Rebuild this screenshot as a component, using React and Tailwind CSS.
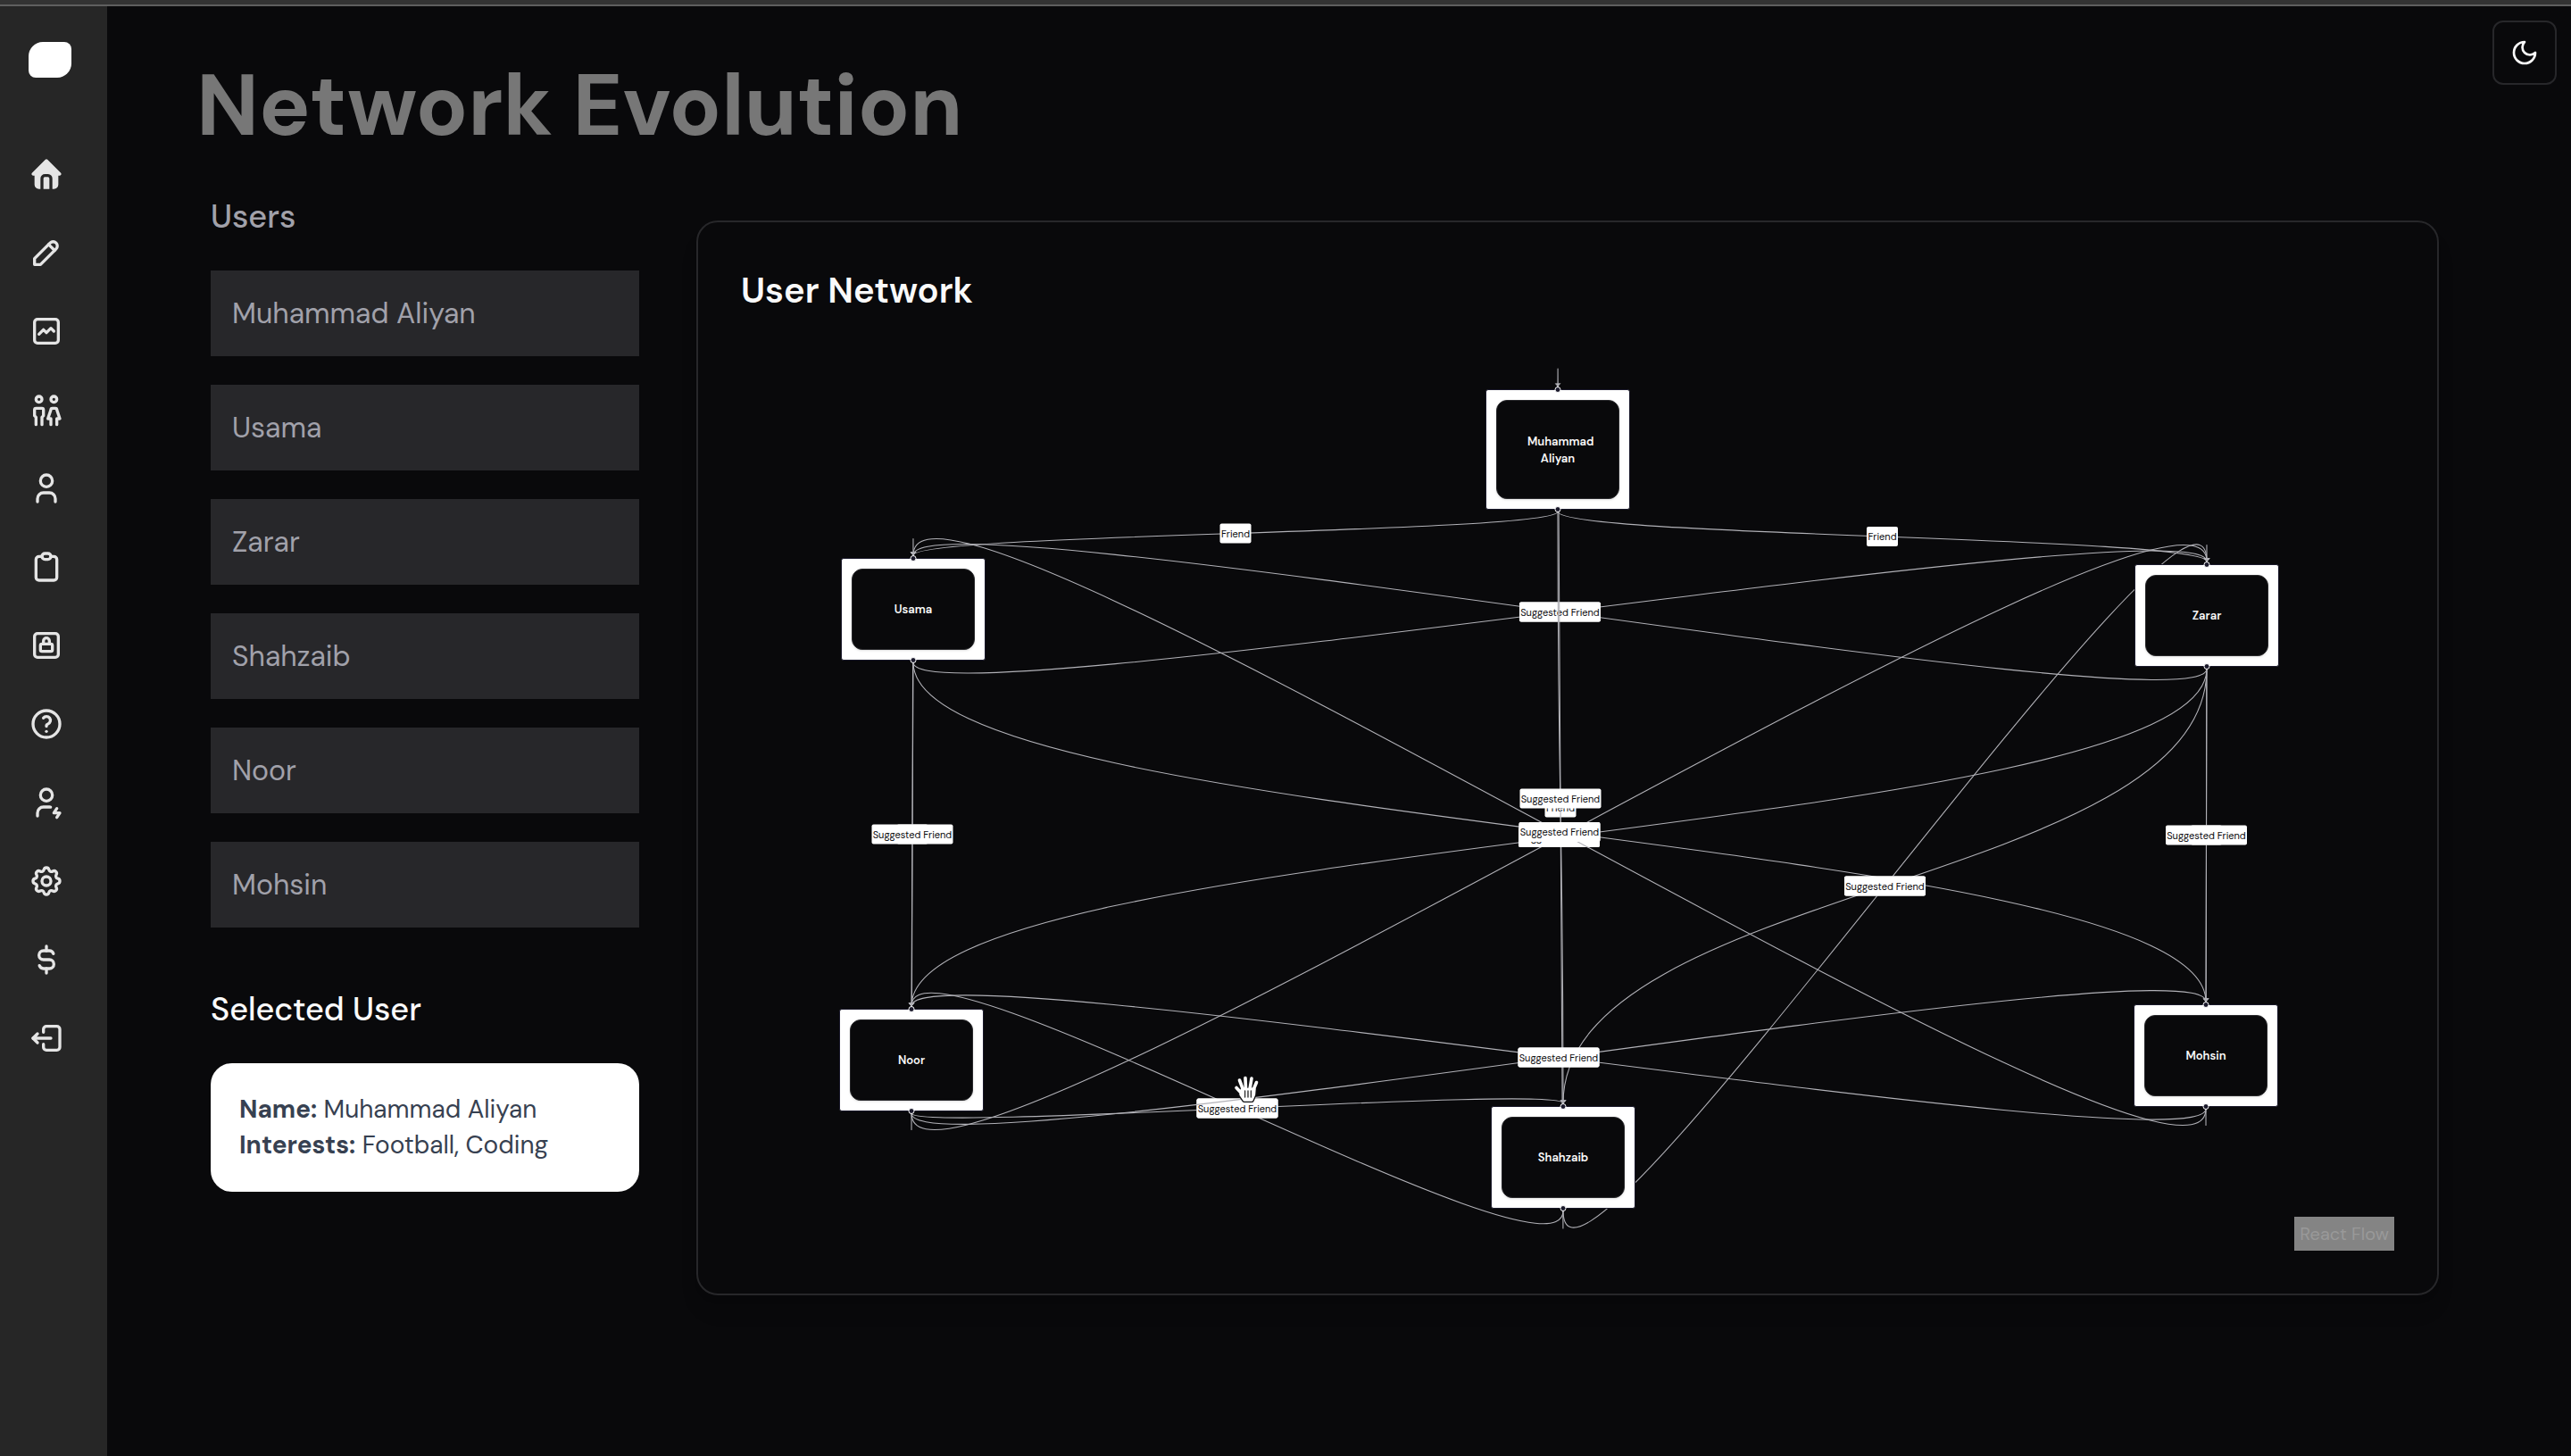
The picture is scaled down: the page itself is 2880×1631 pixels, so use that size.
import { useState } from "react";

const users = [
  { name: "Muhammad Aliyan", interests: "Football, Coding" },
  { name: "Usama", interests: "Cricket, Music" },
  { name: "Zarar", interests: "Gaming, Travel" },
  { name: "Shahzaib", interests: "Coding, Chess" },
  { name: "Noor", interests: "Reading, Art" },
  { name: "Mohsin", interests: "Football, Photography" },
];

const navIcons = [
  {
    label: "Home",
    filled: true,
    paths: [
      "M12.707 2.293l9 9c.63 .63 .184 1.707 -.707 1.707h-1v6a3 3 0 0 1 -3 3h-1v-7a3 3 0 0 0 -2.824 -2.995l-.176 -.005h-2a3 3 0 0 0 -3 3v7h-1a3 3 0 0 1 -3 -3v-6h-1c-.89 0 -1.337 -1.077 -.707 -1.707l9 -9a1 1 0 0 1 1.414 0m.293 11.707a1 1 0 0 1 1 1v7h-4v-7a1 1 0 0 1 .883 -.993l.117 -.007z",
    ],
  },
  { label: "Write", paths: ["M4 20h4l10.5 -10.5a2.828 2.828 0 1 0 -4 -4l-10.5 10.5v4", "M13.5 6.5l4 4"] },
  {
    label: "Insights",
    paths: [
      "M4 18v-12a2 2 0 0 1 2 -2h12a2 2 0 0 1 2 2v12a2 2 0 0 1 -2 2h-12a2 2 0 0 1 -2 -2z",
      "M7 14l3 -3l2 2l3 -3l2 2",
    ],
  },
  {
    label: "Friends",
    paths: [
      "M7 5m-2 0a2 2 0 1 0 4 0a2 2 0 1 0 -4 0",
      "M5 22v-5l-1 -1v-4a1 1 0 0 1 1 -1h4a1 1 0 0 1 1 1v4l-1 1v5",
      "M17 5m-2 0a2 2 0 1 0 4 0a2 2 0 1 0 -4 0",
      "M15 22v-4h-2l2 -6a1 1 0 0 1 1 -1h2a1 1 0 0 1 1 1l2 6h-2v4",
    ],
  },
  { label: "Profile", paths: ["M8 7a4 4 0 1 0 8 0a4 4 0 0 0 -8 0", "M6 21v-2a4 4 0 0 1 4 -4h4a4 4 0 0 1 4 4v2"] },
  {
    label: "Clipboard",
    paths: [
      "M9 5h-2a2 2 0 0 0 -2 2v12a2 2 0 0 0 2 2h10a2 2 0 0 0 2 -2v-12a2 2 0 0 0 -2 -2h-2",
      "M9 5a2 2 0 0 1 2 -2h2a2 2 0 0 1 2 2a2 2 0 0 1 -2 2h-2a2 2 0 0 1 -2 -2z",
    ],
  },
  {
    label: "Privacy",
    paths: [
      "M8 12a1 1 0 0 1 1 -1h6a1 1 0 0 1 1 1v3a1 1 0 0 1 -1 1h-6a1 1 0 0 1 -1 -1z",
      "M10 11v-2a2 2 0 1 1 4 0v2",
      "M4 6a2 2 0 0 1 2 -2h12a2 2 0 0 1 2 2v12a2 2 0 0 1 -2 2h-12a2 2 0 0 1 -2 -2z",
    ],
  },
  {
    label: "Help",
    paths: [
      "M12 12m-9 0a9 9 0 1 0 18 0a9 9 0 1 0 -18 0",
      "M12 17l0 .01",
      "M12 13.5a1.5 1.5 0 0 1 1 -1.5a2.6 2.6 0 1 0 -3 -4",
    ],
  },
  {
    label: "Activity",
    paths: [
      "M8 7a4 4 0 1 0 8 0a4 4 0 0 0 -8 0",
      "M6 21v-2a4 4 0 0 1 4 -4h4c.267 0 .529 .026 .781 .076",
      "M19 16l-2 3h4l-2 3",
    ],
  },
  {
    label: "Settings",
    paths: [
      "M10.325 4.317c.426 -1.756 2.924 -1.756 3.35 0a1.724 1.724 0 0 0 2.573 1.066c1.543 -.94 3.31 .826 2.37 2.37a1.724 1.724 0 0 0 1.065 2.572c1.756 .426 1.756 2.924 0 3.35a1.724 1.724 0 0 0 -1.066 2.573c.94 1.543 -.826 3.31 -2.37 2.37a1.724 1.724 0 0 0 -2.572 1.065c-.426 1.756 -2.924 1.756 -3.35 0a1.724 1.724 0 0 0 -2.573 -1.066c-1.543 .94 -3.31 -.826 -2.37 -2.37a1.724 1.724 0 0 0 -1.065 -2.572c-1.756 -.426 -1.756 -2.924 0 -3.35a1.724 1.724 0 0 0 1.066 -2.573c-.94 -1.543 .826 -3.31 2.37 -2.37c1 .608 2.296 .07 2.572 -1.065z",
      "M9 12a3 3 0 1 0 6 0a3 3 0 0 0 -6 0",
    ],
  },
  {
    label: "Billing",
    paths: ["M16.7 8a3 3 0 0 0 -2.7 -2h-4a3 3 0 0 0 0 6h4a3 3 0 0 1 0 6h-4a3 3 0 0 1 -2.7 -2", "M12 3v3m0 12v3"],
  },
  {
    label: "Log out",
    paths: [
      "M10 8v-2a2 2 0 0 1 2 -2h7a2 2 0 0 1 2 2v12a2 2 0 0 1 -2 2h-7a2 2 0 0 1 -2 -2v-2",
      "M15 12h-12l3 -3",
      "M6 15l-3 -3",
    ],
  },
];

// Canvas position of every node in the network.
const nodes = {
  aliyan: { x: 834, y: 35, w: 162, h: 135, lines: ["\u00a0\u00a0Muhammad", "Aliyan"] },
  usama: { x: 112, y: 224, w: 162, h: 115, lines: ["Usama"] },
  zarar: { x: 1561, y: 231, w: 162, h: 115, lines: ["Zarar"] },
  shahzaib: { x: 840, y: 838, w: 162, h: 115, lines: ["Shahzaib"] },
  noor: { x: 110, y: 729, w: 162, h: 115, lines: ["Noor"] },
  mohsin: { x: 1560, y: 724, w: 162, h: 115, lines: ["Mohsin"] },
};

const FRIEND = "Friend";
const SUGGESTED = "Suggested Friend";

// Later edges are painted over earlier ones.
const edges = [
  ["aliyan", "usama", FRIEND],
  ["aliyan", "zarar", FRIEND],
  ["usama", "zarar", SUGGESTED],
  ["usama", "noor", FRIEND],
  ["usama", "mohsin", SUGGESTED],
  ["zarar", "usama", SUGGESTED],
  ["zarar", "mohsin", FRIEND],
  ["zarar", "noor", SUGGESTED],
  ["zarar", "shahzaib", SUGGESTED],
  ["aliyan", "shahzaib", FRIEND],
  ["shahzaib", "aliyan", SUGGESTED],
  ["shahzaib", "zarar", SUGGESTED],
  ["shahzaib", "noor", SUGGESTED],
  ["noor", "shahzaib", SUGGESTED],
  ["noor", "usama", SUGGESTED],
  ["noor", "zarar", SUGGESTED],
  ["noor", "mohsin", SUGGESTED],
  ["mohsin", "zarar", SUGGESTED],
  ["mohsin", "usama", SUGGESTED],
  ["mohsin", "noor", SUGGESTED],
];

const SCALE = 16 / 15;

function edgeGeometry(from, to) {
  const sx = from.x + from.w / 2;
  const sy = from.y + from.h + 2;
  const tx = to.x + to.w / 2;
  const ty = to.y - 3;
  const distance = ty - sy;
  const bend = distance >= 0 ? distance / 2 : 6.25 * Math.sqrt(-distance / SCALE) * SCALE;
  return {
    d: `M${sx},${sy} C${sx},${sy + bend} ${tx},${ty - bend} ${tx},${ty}`,
    lx: (sx + tx) / 2,
    ly: (sy + ty) / 2,
  };
}

function Edge({ from, to, label }) {
  const { d, lx, ly } = edgeGeometry(nodes[from], nodes[to]);
  const width = label === FRIEND ? 35 : 91;
  return (
    <g>
      <path d={d} fill="none" stroke="#b1b1b7" strokeWidth="1.07" markerEnd="url(#arrow)" />
      <rect x={lx - width / 2} y={ly - 11} width={width} height="22" rx="2" fill="#ffffff" />
      <text x={lx} y={ly + 4} textAnchor="middle" className="fill-[#09090b] text-[11px]">
        {label}
      </text>
    </g>
  );
}

function Node({ node }) {
  return (
    <div
      className="absolute flex rounded-[3px] border border-[#1a192b] bg-white p-[11px]"
      style={{ left: node.x, top: node.y, width: node.w, height: node.h }}
    >
      <span className="absolute -top-1 left-1/2 size-[7px] -translate-x-1/2 rounded-full border border-white bg-[#1a192b]" />
      <div className="flex flex-1 flex-col items-center justify-center rounded-xl border border-[#27272a] bg-[#09090b] text-[13px] leading-[19px] font-semibold text-[#fafafa] shadow">
        {node.lines.map((line) => (
          <span key={line}>{line}</span>
        ))}
      </div>
      <span className="absolute -bottom-1 left-1/2 size-[7px] -translate-x-1/2 rounded-full border border-white bg-[#1a192b]" />
    </div>
  );
}

function GrabCursor() {
  const hand =
    "M11 18 L6.5 6 M13.5 16 L13 3.5 M18 16 L20 4 M21.5 18 L25.5 8.5 M10 22 L3 14.5";
  const palm = "M9 17 L23 16 L22.5 22 L20 28 L12 28 L8 22 Z";
  return (
    <svg
      viewBox="0 0 30 34"
      aria-hidden="true"
      className="pointer-events-none absolute top-[803px] left-[552px] h-[34px] w-[30px] overflow-visible"
      strokeLinecap="round"
      strokeLinejoin="round"
    >
      <g fill="#111113" stroke="#111113">
        <path d={hand} strokeWidth="5.5" />
        <path d={palm} strokeWidth="6" />
      </g>
      <g fill="#ffffff" stroke="#ffffff">
        <path d={hand} strokeWidth="3.6" />
        <path d={palm} strokeWidth="3.4" />
      </g>
      <path d="M12.6 18v7M16 18v7M19.4 18v7" stroke="#333333" strokeWidth="1.4" />
    </svg>
  );
}

function Sidebar() {
  return (
    <aside className="w-[120px] shrink-0 bg-[#262626] px-8 py-8">
      <a href="#" aria-label="Dashboard" className="block py-2">
        <span className="block h-10 w-12 rounded-tl-2xl rounded-tr-lg rounded-br-2xl rounded-bl-lg bg-white" />
      </a>
      <nav className="mt-16 flex flex-col">
        {navIcons.map((icon) => (
          <a key={icon.label} href="#" aria-label={icon.label} className="flex h-22 items-center pb-4 text-[#e5e5e5]">
            <svg
              viewBox="0 0 24 24"
              className="size-10"
              fill={icon.filled ? "currentColor" : "none"}
              stroke={icon.filled ? "none" : "currentColor"}
              strokeWidth="2"
              strokeLinecap="round"
              strokeLinejoin="round"
            >
              {icon.paths.map((d) => (
                <path key={d} d={d} />
              ))}
            </svg>
          </a>
        ))}
      </nav>
    </aside>
  );
}

export default function App() {
  const [selected, setSelected] = useState(users[0]);
  return (
    <div className="flex min-h-screen flex-col bg-[#09090b] font-['DM_Sans',Inter,sans-serif]">
      <div className="h-[7px] border-b-2 border-[#5f5f5f] bg-[#333333]" />
      <div className="flex flex-1">
        <Sidebar />
        <main className="min-w-0 flex-1 pt-16 pr-11 pl-[100px]">
          <h1 className="text-8xl leading-none font-bold text-[#777777]">Network Evolution</h1>
          <div className="mt-12 flex items-start gap-16 pl-4">
            <section className="w-[480px] shrink-0">
              <h2 className="text-4xl leading-14 font-medium text-[#a1a1aa]">Users</h2>
              <ul className="mt-8 flex flex-col gap-8">
                {users.map((user) => (
                  <li key={user.name}>
                    <button
                      type="button"
                      onClick={() => setSelected(user)}
                      className="block w-full bg-[#27272a] p-6 text-left text-[32px] leading-12 text-[#a1a1aa]"
                    >
                      {user.name}
                    </button>
                  </li>
                ))}
              </ul>
              <h2 className="mt-16 text-4xl leading-14 font-medium text-[#fafafa]">Selected User</h2>
              <div className="mt-8 rounded-3xl bg-white p-8 text-[28px] leading-10 text-[#374151]">
                <p>
                  <strong className="font-bold">Name:</strong> {selected.name}
                </p>
                <p>
                  <strong className="font-bold">Interests:</strong> {selected.interests}
                </p>
              </div>
            </section>
            <section className="mt-8 min-w-0 flex-1 rounded-3xl border-2 border-[#27272a] p-12 shadow-xl">
              <h2 className="text-[40px] leading-14 font-semibold text-[#fafafa]">User Network</h2>
              <div className="relative mt-12 flex h-[1000px] items-end justify-end">
                <svg className="absolute inset-0 size-full overflow-visible" role="img" aria-label="User network">
                  <defs>
                    <marker
                      id="arrow"
                      viewBox="-10 -10 20 20"
                      markerWidth="12.5"
                      markerHeight="12.5"
                      orient="auto-start-reverse"
                      refX="0"
                      refY="0"
                    >
                      <polyline
                        points="-5,-4 0,0 -5,4 -5,-4"
                        fill="#b1b1b7"
                        stroke="#b1b1b7"
                        strokeLinecap="round"
                        strokeLinejoin="round"
                      />
                    </marker>
                  </defs>
                  {edges.map(([from, to, label]) => (
                    <Edge key={from + to} from={from} to={to} label={label} />
                  ))}
                </svg>
                {Object.entries(nodes).map(([id, node]) => (
                  <Node key={id} node={node} />
                ))}
                <GrabCursor />
                <a href="#" className="relative bg-[#848484] px-[6px] py-1 text-xl leading-[30px] text-[#999999]">
                  React Flow
                </a>
              </div>
            </section>
          </div>
        </main>
        <div className="shrink-0 p-4">
          <button
            type="button"
            aria-label="Toggle theme"
            className="flex size-18 items-center justify-center rounded-xl border-2 border-[#27272a] text-[#fafafa]"
          >
            <svg
              viewBox="0 0 24 24"
              className="size-8"
              fill="none"
              stroke="currentColor"
              strokeWidth="2"
              strokeLinecap="round"
              strokeLinejoin="round"
            >
              <path d="M12 3a6 6 0 0 0 9 9 9 9 0 1 1-9-9Z" />
            </svg>
          </button>
        </div>
      </div>
    </div>
  );
}
